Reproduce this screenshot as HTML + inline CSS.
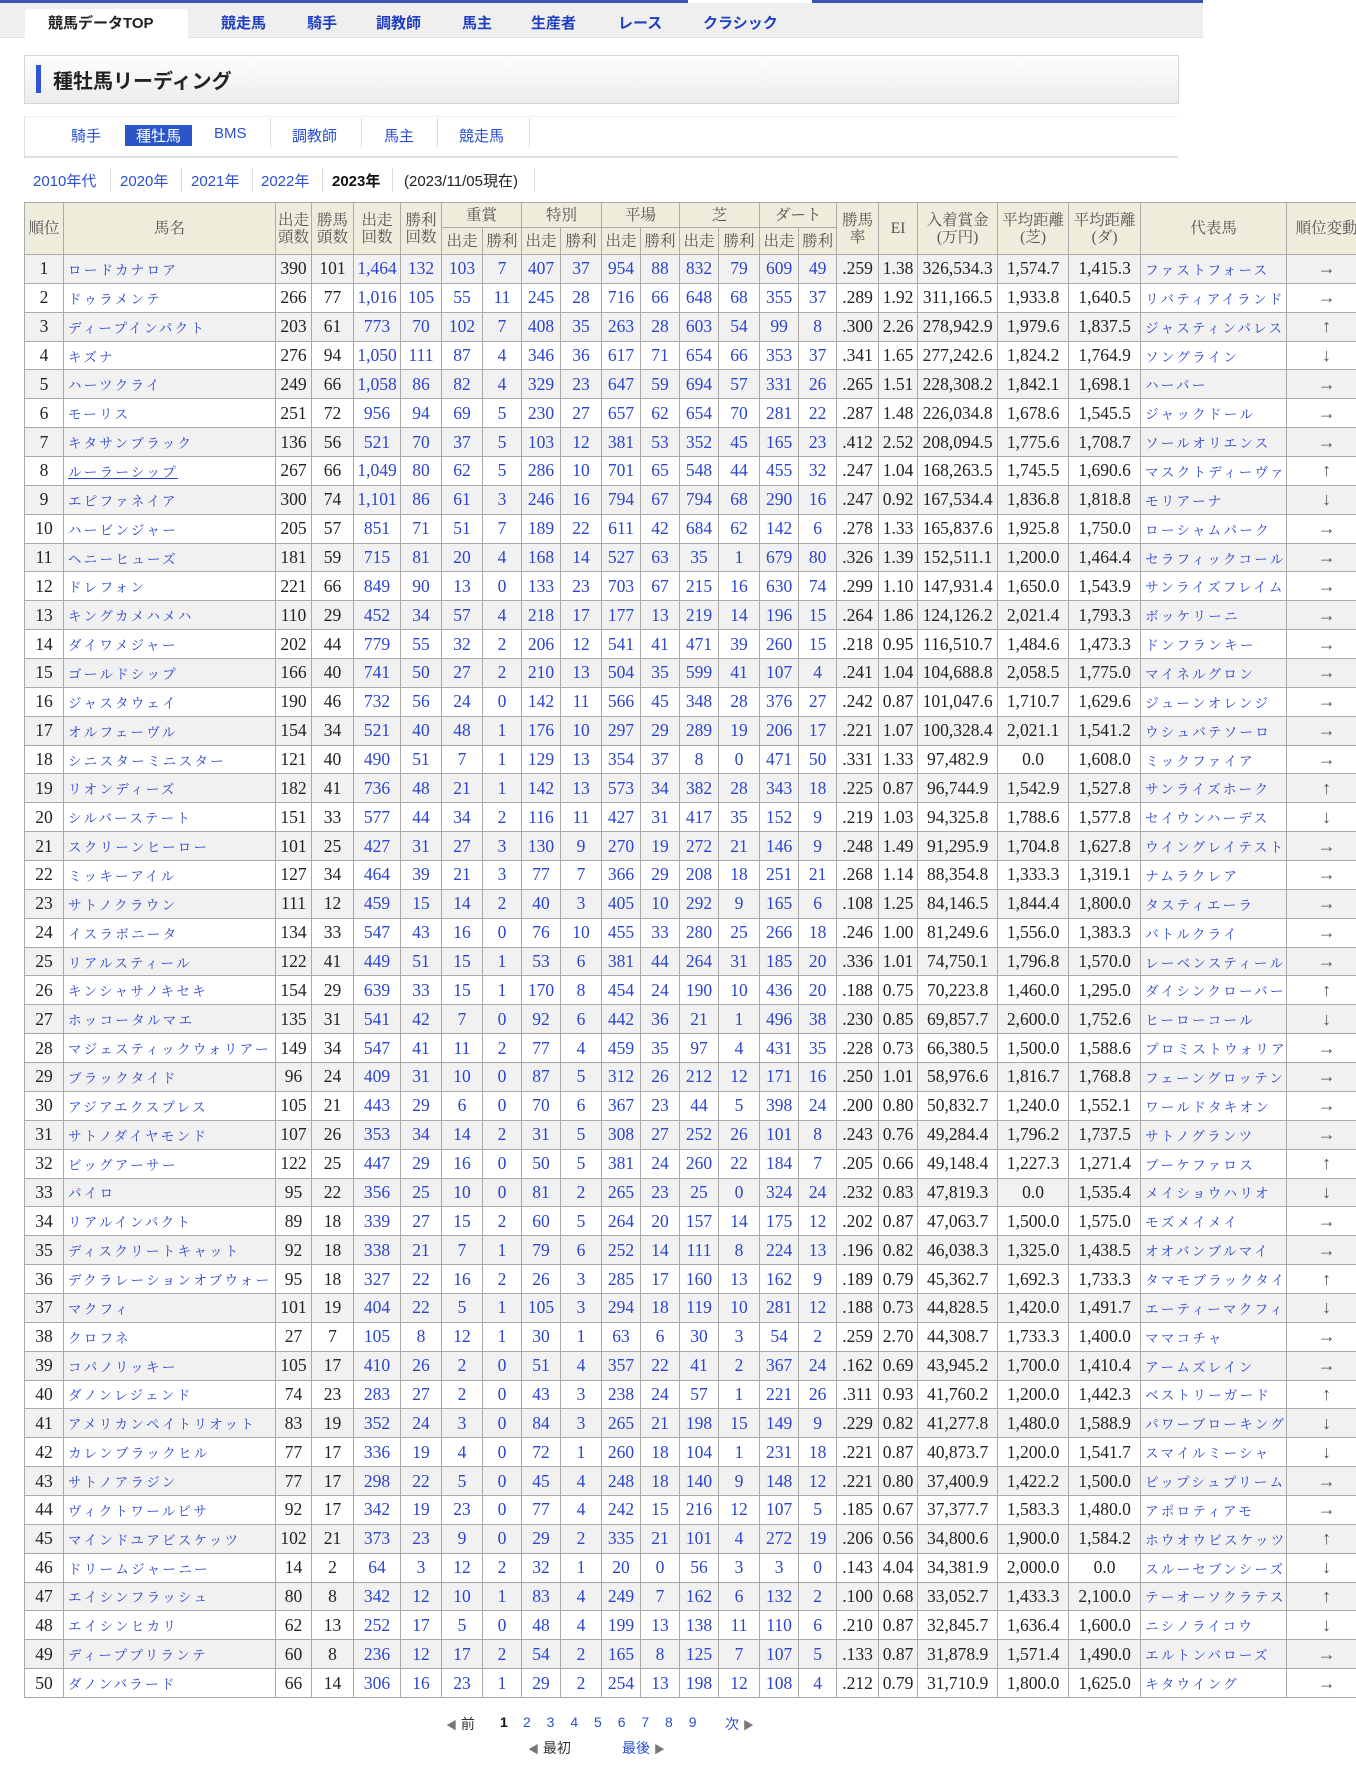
<!DOCTYPE html>
<html><head><meta charset="utf-8">
<style>
html,body{margin:0;padding:0;background:#fff;}
body{width:1356px;height:1778px;overflow:hidden;position:relative;font-family:"Liberation Sans","Noto Sans CJK JP",sans-serif;}
.topline{position:absolute;left:0;top:0;height:3px;background:#3a54b4;}
.nav{position:absolute;left:0;top:3px;width:1203px;height:34px;background:#efefef;border-bottom:1px solid #e2e2e2;}
.tab{position:absolute;left:25px;top:9px;width:163px;height:29px;background:#fff;border-radius:4px 4px 0 0;}
.nv{position:absolute;top:12px;font-size:15px;font-weight:bold;color:#1f3fc0;white-space:nowrap;}
.titlebox{position:absolute;left:24px;top:55px;width:1153px;height:47px;border:1px solid #d6d6d6;background:linear-gradient(#fefefe,#ececec);}
.titlebar{position:absolute;left:11px;top:9px;width:5px;height:28px;background:#2f55d4;}
.title{position:absolute;left:28px;top:9px;font-size:20px;font-weight:bold;color:#222;}
.subbox{position:absolute;left:24px;top:116px;width:1153px;height:39px;border:1px solid #e0e0e0;border-right:none;border-top:1px solid #f2f2f2;border-bottom:2px solid #e0e0e0;}
.sn{position:absolute;top:125px;font-size:15px;color:#2a4fd0;white-space:nowrap;}
.sel{position:absolute;left:125px;top:125px;width:67px;height:21px;background:#2a56c8;}
.sep{position:absolute;width:1px;background:#dcdcdc;}
.yr{position:absolute;top:170px;font-size:15px;color:#2a4fd0;white-space:nowrap;}
table{position:absolute;left:24px;top:202px;border-collapse:collapse;table-layout:fixed;width:1342px;font-family:"Liberation Serif","Noto Serif CJK SC",serif;}
th{background:#efecdc;border:1px solid #a9a9a9;color:#555;font-weight:normal;font-size:15.5px;line-height:17px;padding:0;text-align:center;}
td{border:1px solid #a9a9a9;padding:0;text-align:center;font-size:17.5px;color:#222;white-space:nowrap;overflow:hidden;}
thead tr.r1{height:25px}
thead tr.r2{height:27px}
tbody tr{height:28.86px}
tbody tr:nth-child(odd){background:#f1f1f1}
tbody td:nth-child(2),tbody td:nth-child(22){text-align:left;padding-left:4px;font-size:13.5px;letter-spacing:2.3px;color:#2a45cc;}
tbody td:nth-child(n+5):nth-child(-n+16){color:#2a45cc;}
tbody td:nth-child(23){color:#555;font-size:18px;}
.pg{position:absolute;font-size:14px;white-space:nowrap;color:#2a4fd0;}
.tri{color:#777;font-size:11px;}
</style></head><body>
<div class="topline" style="width:688px"></div>
<div class="topline" style="left:812px;width:391px"></div>
<div class="nav"></div>
<div class="tab"></div>
<div class="nv" style="left:48px;color:#222">競馬データTOP</div>
<div class="nv" style="left:221px">競走馬</div>
<div class="nv" style="left:307px">騎手</div>
<div class="nv" style="left:376px">調教師</div>
<div class="nv" style="left:462px">馬主</div>
<div class="nv" style="left:531px">生産者</div>
<div class="nv" style="left:618px">レース</div>
<div class="nv" style="left:703px">クラシック</div>

<div class="titlebox"><div class="titlebar"></div><div class="title">種牡馬リーディング</div></div>

<div class="subbox"></div>
<div class="sel"></div>
<div class="sn" style="left:71px">騎手</div>
<div class="sn" style="left:136px;color:#fff">種牡馬</div>
<div class="sn" style="left:214px">BMS</div>
<div class="sep" style="left:270px;top:118px;height:29px"></div>
<div class="sn" style="left:292px">調教師</div>
<div class="sep" style="left:361px;top:118px;height:29px"></div>
<div class="sn" style="left:384px">馬主</div>
<div class="sep" style="left:437px;top:118px;height:29px"></div>
<div class="sn" style="left:459px">競走馬</div>
<div class="sep" style="left:529px;top:118px;height:29px"></div>

<div class="yr" style="left:33px">2010年代</div>
<div class="sep" style="left:110px;top:168px;height:24px"></div>
<div class="yr" style="left:120px">2020年</div>
<div class="sep" style="left:181px;top:168px;height:24px"></div>
<div class="yr" style="left:191px">2021年</div>
<div class="sep" style="left:252px;top:168px;height:24px"></div>
<div class="yr" style="left:261px">2022年</div>
<div class="sep" style="left:322px;top:168px;height:24px"></div>
<div class="yr" style="left:332px;color:#111;font-weight:bold">2023年</div>
<div class="sep" style="left:392px;top:168px;height:24px"></div>
<div class="yr" style="left:404px;color:#222">(2023/11/05現在)</div>
<div class="sep" style="left:534px;top:168px;height:24px"></div>

<table>
<colgroup><col style="width:39px"><col style="width:212px"><col style="width:36px"><col style="width:42px"><col style="width:47px"><col style="width:41px"><col style="width:41px"><col style="width:39px"><col style="width:39px"><col style="width:41px"><col style="width:39px"><col style="width:39px"><col style="width:39px"><col style="width:41px"><col style="width:39px"><col style="width:38px"><col style="width:42px"><col style="width:39px"><col style="width:80px"><col style="width:71px"><col style="width:72px"><col style="width:146px"><col style="width:80px"></colgroup>
<thead>
<tr class="r1"><th rowspan="2">順位</th><th rowspan="2">馬名</th><th rowspan="2">出走<br>頭数</th><th rowspan="2">勝馬<br>頭数</th><th rowspan="2">出走<br>回数</th><th rowspan="2">勝利<br>回数</th><th colspan="2">重賞</th><th colspan="2">特別</th><th colspan="2">平場</th><th colspan="2">芝</th><th colspan="2">ダート</th><th rowspan="2">勝馬<br>率</th><th rowspan="2">EI</th><th rowspan="2">入着賞金<br>(万円)</th><th rowspan="2">平均距離<br>(芝)</th><th rowspan="2">平均距離<br>(ダ)</th><th rowspan="2">代表馬</th><th rowspan="2">順位変動</th></tr>
<tr class="r2"><th>出走</th><th>勝利</th><th>出走</th><th>勝利</th><th>出走</th><th>勝利</th><th>出走</th><th>勝利</th><th>出走</th><th>勝利</th></tr>
</thead>
<tbody>
<tr><td>1</td><td>ロードカナロア</td><td>390</td><td>101</td><td>1,464</td><td>132</td><td>103</td><td>7</td><td>407</td><td>37</td><td>954</td><td>88</td><td>832</td><td>79</td><td>609</td><td>49</td><td>.259</td><td>1.38</td><td>326,534.3</td><td>1,574.7</td><td>1,415.3</td><td>ファストフォース</td><td>→</td></tr>
<tr><td>2</td><td>ドゥラメンテ</td><td>266</td><td>77</td><td>1,016</td><td>105</td><td>55</td><td>11</td><td>245</td><td>28</td><td>716</td><td>66</td><td>648</td><td>68</td><td>355</td><td>37</td><td>.289</td><td>1.92</td><td>311,166.5</td><td>1,933.8</td><td>1,640.5</td><td>リバティアイランド</td><td>→</td></tr>
<tr><td>3</td><td>ディープインパクト</td><td>203</td><td>61</td><td>773</td><td>70</td><td>102</td><td>7</td><td>408</td><td>35</td><td>263</td><td>28</td><td>603</td><td>54</td><td>99</td><td>8</td><td>.300</td><td>2.26</td><td>278,942.9</td><td>1,979.6</td><td>1,837.5</td><td>ジャスティンパレス</td><td>↑</td></tr>
<tr><td>4</td><td>キズナ</td><td>276</td><td>94</td><td>1,050</td><td>111</td><td>87</td><td>4</td><td>346</td><td>36</td><td>617</td><td>71</td><td>654</td><td>66</td><td>353</td><td>37</td><td>.341</td><td>1.65</td><td>277,242.6</td><td>1,824.2</td><td>1,764.9</td><td>ソングライン</td><td>↓</td></tr>
<tr><td>5</td><td>ハーツクライ</td><td>249</td><td>66</td><td>1,058</td><td>86</td><td>82</td><td>4</td><td>329</td><td>23</td><td>647</td><td>59</td><td>694</td><td>57</td><td>331</td><td>26</td><td>.265</td><td>1.51</td><td>228,308.2</td><td>1,842.1</td><td>1,698.1</td><td>ハーパー</td><td>→</td></tr>
<tr><td>6</td><td>モーリス</td><td>251</td><td>72</td><td>956</td><td>94</td><td>69</td><td>5</td><td>230</td><td>27</td><td>657</td><td>62</td><td>654</td><td>70</td><td>281</td><td>22</td><td>.287</td><td>1.48</td><td>226,034.8</td><td>1,678.6</td><td>1,545.5</td><td>ジャックドール</td><td>→</td></tr>
<tr><td>7</td><td>キタサンブラック</td><td>136</td><td>56</td><td>521</td><td>70</td><td>37</td><td>5</td><td>103</td><td>12</td><td>381</td><td>53</td><td>352</td><td>45</td><td>165</td><td>23</td><td>.412</td><td>2.52</td><td>208,094.5</td><td>1,775.6</td><td>1,708.7</td><td>ソールオリエンス</td><td>→</td></tr>
<tr><td>8</td><td><u>ルーラーシップ</u></td><td>267</td><td>66</td><td>1,049</td><td>80</td><td>62</td><td>5</td><td>286</td><td>10</td><td>701</td><td>65</td><td>548</td><td>44</td><td>455</td><td>32</td><td>.247</td><td>1.04</td><td>168,263.5</td><td>1,745.5</td><td>1,690.6</td><td>マスクトディーヴァ</td><td>↑</td></tr>
<tr><td>9</td><td>エピファネイア</td><td>300</td><td>74</td><td>1,101</td><td>86</td><td>61</td><td>3</td><td>246</td><td>16</td><td>794</td><td>67</td><td>794</td><td>68</td><td>290</td><td>16</td><td>.247</td><td>0.92</td><td>167,534.4</td><td>1,836.8</td><td>1,818.8</td><td>モリアーナ</td><td>↓</td></tr>
<tr><td>10</td><td>ハービンジャー</td><td>205</td><td>57</td><td>851</td><td>71</td><td>51</td><td>7</td><td>189</td><td>22</td><td>611</td><td>42</td><td>684</td><td>62</td><td>142</td><td>6</td><td>.278</td><td>1.33</td><td>165,837.6</td><td>1,925.8</td><td>1,750.0</td><td>ローシャムパーク</td><td>→</td></tr>
<tr><td>11</td><td>ヘニーヒューズ</td><td>181</td><td>59</td><td>715</td><td>81</td><td>20</td><td>4</td><td>168</td><td>14</td><td>527</td><td>63</td><td>35</td><td>1</td><td>679</td><td>80</td><td>.326</td><td>1.39</td><td>152,511.1</td><td>1,200.0</td><td>1,464.4</td><td>セラフィックコール</td><td>→</td></tr>
<tr><td>12</td><td>ドレフォン</td><td>221</td><td>66</td><td>849</td><td>90</td><td>13</td><td>0</td><td>133</td><td>23</td><td>703</td><td>67</td><td>215</td><td>16</td><td>630</td><td>74</td><td>.299</td><td>1.10</td><td>147,931.4</td><td>1,650.0</td><td>1,543.9</td><td>サンライズフレイム</td><td>→</td></tr>
<tr><td>13</td><td>キングカメハメハ</td><td>110</td><td>29</td><td>452</td><td>34</td><td>57</td><td>4</td><td>218</td><td>17</td><td>177</td><td>13</td><td>219</td><td>14</td><td>196</td><td>15</td><td>.264</td><td>1.86</td><td>124,126.2</td><td>2,021.4</td><td>1,793.3</td><td>ボッケリーニ</td><td>→</td></tr>
<tr><td>14</td><td>ダイワメジャー</td><td>202</td><td>44</td><td>779</td><td>55</td><td>32</td><td>2</td><td>206</td><td>12</td><td>541</td><td>41</td><td>471</td><td>39</td><td>260</td><td>15</td><td>.218</td><td>0.95</td><td>116,510.7</td><td>1,484.6</td><td>1,473.3</td><td>ドンフランキー</td><td>→</td></tr>
<tr><td>15</td><td>ゴールドシップ</td><td>166</td><td>40</td><td>741</td><td>50</td><td>27</td><td>2</td><td>210</td><td>13</td><td>504</td><td>35</td><td>599</td><td>41</td><td>107</td><td>4</td><td>.241</td><td>1.04</td><td>104,688.8</td><td>2,058.5</td><td>1,775.0</td><td>マイネルグロン</td><td>→</td></tr>
<tr><td>16</td><td>ジャスタウェイ</td><td>190</td><td>46</td><td>732</td><td>56</td><td>24</td><td>0</td><td>142</td><td>11</td><td>566</td><td>45</td><td>348</td><td>28</td><td>376</td><td>27</td><td>.242</td><td>0.87</td><td>101,047.6</td><td>1,710.7</td><td>1,629.6</td><td>ジューンオレンジ</td><td>→</td></tr>
<tr><td>17</td><td>オルフェーヴル</td><td>154</td><td>34</td><td>521</td><td>40</td><td>48</td><td>1</td><td>176</td><td>10</td><td>297</td><td>29</td><td>289</td><td>19</td><td>206</td><td>17</td><td>.221</td><td>1.07</td><td>100,328.4</td><td>2,021.1</td><td>1,541.2</td><td>ウシュバテソーロ</td><td>→</td></tr>
<tr><td>18</td><td>シニスターミニスター</td><td>121</td><td>40</td><td>490</td><td>51</td><td>7</td><td>1</td><td>129</td><td>13</td><td>354</td><td>37</td><td>8</td><td>0</td><td>471</td><td>50</td><td>.331</td><td>1.33</td><td>97,482.9</td><td>0.0</td><td>1,608.0</td><td>ミックファイア</td><td>→</td></tr>
<tr><td>19</td><td>リオンディーズ</td><td>182</td><td>41</td><td>736</td><td>48</td><td>21</td><td>1</td><td>142</td><td>13</td><td>573</td><td>34</td><td>382</td><td>28</td><td>343</td><td>18</td><td>.225</td><td>0.87</td><td>96,744.9</td><td>1,542.9</td><td>1,527.8</td><td>サンライズホーク</td><td>↑</td></tr>
<tr><td>20</td><td>シルバーステート</td><td>151</td><td>33</td><td>577</td><td>44</td><td>34</td><td>2</td><td>116</td><td>11</td><td>427</td><td>31</td><td>417</td><td>35</td><td>152</td><td>9</td><td>.219</td><td>1.03</td><td>94,325.8</td><td>1,788.6</td><td>1,577.8</td><td>セイウンハーデス</td><td>↓</td></tr>
<tr><td>21</td><td>スクリーンヒーロー</td><td>101</td><td>25</td><td>427</td><td>31</td><td>27</td><td>3</td><td>130</td><td>9</td><td>270</td><td>19</td><td>272</td><td>21</td><td>146</td><td>9</td><td>.248</td><td>1.49</td><td>91,295.9</td><td>1,704.8</td><td>1,627.8</td><td>ウイングレイテスト</td><td>→</td></tr>
<tr><td>22</td><td>ミッキーアイル</td><td>127</td><td>34</td><td>464</td><td>39</td><td>21</td><td>3</td><td>77</td><td>7</td><td>366</td><td>29</td><td>208</td><td>18</td><td>251</td><td>21</td><td>.268</td><td>1.14</td><td>88,354.8</td><td>1,333.3</td><td>1,319.1</td><td>ナムラクレア</td><td>→</td></tr>
<tr><td>23</td><td>サトノクラウン</td><td>111</td><td>12</td><td>459</td><td>15</td><td>14</td><td>2</td><td>40</td><td>3</td><td>405</td><td>10</td><td>292</td><td>9</td><td>165</td><td>6</td><td>.108</td><td>1.25</td><td>84,146.5</td><td>1,844.4</td><td>1,800.0</td><td>タスティエーラ</td><td>→</td></tr>
<tr><td>24</td><td>イスラボニータ</td><td>134</td><td>33</td><td>547</td><td>43</td><td>16</td><td>0</td><td>76</td><td>10</td><td>455</td><td>33</td><td>280</td><td>25</td><td>266</td><td>18</td><td>.246</td><td>1.00</td><td>81,249.6</td><td>1,556.0</td><td>1,383.3</td><td>バトルクライ</td><td>→</td></tr>
<tr><td>25</td><td>リアルスティール</td><td>122</td><td>41</td><td>449</td><td>51</td><td>15</td><td>1</td><td>53</td><td>6</td><td>381</td><td>44</td><td>264</td><td>31</td><td>185</td><td>20</td><td>.336</td><td>1.01</td><td>74,750.1</td><td>1,796.8</td><td>1,570.0</td><td>レーベンスティール</td><td>→</td></tr>
<tr><td>26</td><td>キンシャサノキセキ</td><td>154</td><td>29</td><td>639</td><td>33</td><td>15</td><td>1</td><td>170</td><td>8</td><td>454</td><td>24</td><td>190</td><td>10</td><td>436</td><td>20</td><td>.188</td><td>0.75</td><td>70,223.8</td><td>1,460.0</td><td>1,295.0</td><td>ダイシンクローバー</td><td>↑</td></tr>
<tr><td>27</td><td>ホッコータルマエ</td><td>135</td><td>31</td><td>541</td><td>42</td><td>7</td><td>0</td><td>92</td><td>6</td><td>442</td><td>36</td><td>21</td><td>1</td><td>496</td><td>38</td><td>.230</td><td>0.85</td><td>69,857.7</td><td>2,600.0</td><td>1,752.6</td><td>ヒーローコール</td><td>↓</td></tr>
<tr><td>28</td><td>マジェスティックウォリアー</td><td>149</td><td>34</td><td>547</td><td>41</td><td>11</td><td>2</td><td>77</td><td>4</td><td>459</td><td>35</td><td>97</td><td>4</td><td>431</td><td>35</td><td>.228</td><td>0.73</td><td>66,380.5</td><td>1,500.0</td><td>1,588.6</td><td>プロミストウォリア</td><td>→</td></tr>
<tr><td>29</td><td>ブラックタイド</td><td>96</td><td>24</td><td>409</td><td>31</td><td>10</td><td>0</td><td>87</td><td>5</td><td>312</td><td>26</td><td>212</td><td>12</td><td>171</td><td>16</td><td>.250</td><td>1.01</td><td>58,976.6</td><td>1,816.7</td><td>1,768.8</td><td>フェーングロッテン</td><td>→</td></tr>
<tr><td>30</td><td>アジアエクスプレス</td><td>105</td><td>21</td><td>443</td><td>29</td><td>6</td><td>0</td><td>70</td><td>6</td><td>367</td><td>23</td><td>44</td><td>5</td><td>398</td><td>24</td><td>.200</td><td>0.80</td><td>50,832.7</td><td>1,240.0</td><td>1,552.1</td><td>ワールドタキオン</td><td>→</td></tr>
<tr><td>31</td><td>サトノダイヤモンド</td><td>107</td><td>26</td><td>353</td><td>34</td><td>14</td><td>2</td><td>31</td><td>5</td><td>308</td><td>27</td><td>252</td><td>26</td><td>101</td><td>8</td><td>.243</td><td>0.76</td><td>49,284.4</td><td>1,796.2</td><td>1,737.5</td><td>サトノグランツ</td><td>→</td></tr>
<tr><td>32</td><td>ビッグアーサー</td><td>122</td><td>25</td><td>447</td><td>29</td><td>16</td><td>0</td><td>50</td><td>5</td><td>381</td><td>24</td><td>260</td><td>22</td><td>184</td><td>7</td><td>.205</td><td>0.66</td><td>49,148.4</td><td>1,227.3</td><td>1,271.4</td><td>ブーケファロス</td><td>↑</td></tr>
<tr><td>33</td><td>パイロ</td><td>95</td><td>22</td><td>356</td><td>25</td><td>10</td><td>0</td><td>81</td><td>2</td><td>265</td><td>23</td><td>25</td><td>0</td><td>324</td><td>24</td><td>.232</td><td>0.83</td><td>47,819.3</td><td>0.0</td><td>1,535.4</td><td>メイショウハリオ</td><td>↓</td></tr>
<tr><td>34</td><td>リアルインパクト</td><td>89</td><td>18</td><td>339</td><td>27</td><td>15</td><td>2</td><td>60</td><td>5</td><td>264</td><td>20</td><td>157</td><td>14</td><td>175</td><td>12</td><td>.202</td><td>0.87</td><td>47,063.7</td><td>1,500.0</td><td>1,575.0</td><td>モズメイメイ</td><td>→</td></tr>
<tr><td>35</td><td>ディスクリートキャット</td><td>92</td><td>18</td><td>338</td><td>21</td><td>7</td><td>1</td><td>79</td><td>6</td><td>252</td><td>14</td><td>111</td><td>8</td><td>224</td><td>13</td><td>.196</td><td>0.82</td><td>46,038.3</td><td>1,325.0</td><td>1,438.5</td><td>オオバンブルマイ</td><td>→</td></tr>
<tr><td>36</td><td>デクラレーションオブウォー</td><td>95</td><td>18</td><td>327</td><td>22</td><td>16</td><td>2</td><td>26</td><td>3</td><td>285</td><td>17</td><td>160</td><td>13</td><td>162</td><td>9</td><td>.189</td><td>0.79</td><td>45,362.7</td><td>1,692.3</td><td>1,733.3</td><td>タマモブラックタイ</td><td>↑</td></tr>
<tr><td>37</td><td>マクフィ</td><td>101</td><td>19</td><td>404</td><td>22</td><td>5</td><td>1</td><td>105</td><td>3</td><td>294</td><td>18</td><td>119</td><td>10</td><td>281</td><td>12</td><td>.188</td><td>0.73</td><td>44,828.5</td><td>1,420.0</td><td>1,491.7</td><td>エーティーマクフィ</td><td>↓</td></tr>
<tr><td>38</td><td>クロフネ</td><td>27</td><td>7</td><td>105</td><td>8</td><td>12</td><td>1</td><td>30</td><td>1</td><td>63</td><td>6</td><td>30</td><td>3</td><td>54</td><td>2</td><td>.259</td><td>2.70</td><td>44,308.7</td><td>1,733.3</td><td>1,400.0</td><td>ママコチャ</td><td>→</td></tr>
<tr><td>39</td><td>コパノリッキー</td><td>105</td><td>17</td><td>410</td><td>26</td><td>2</td><td>0</td><td>51</td><td>4</td><td>357</td><td>22</td><td>41</td><td>2</td><td>367</td><td>24</td><td>.162</td><td>0.69</td><td>43,945.2</td><td>1,700.0</td><td>1,410.4</td><td>アームズレイン</td><td>→</td></tr>
<tr><td>40</td><td>ダノンレジェンド</td><td>74</td><td>23</td><td>283</td><td>27</td><td>2</td><td>0</td><td>43</td><td>3</td><td>238</td><td>24</td><td>57</td><td>1</td><td>221</td><td>26</td><td>.311</td><td>0.93</td><td>41,760.2</td><td>1,200.0</td><td>1,442.3</td><td>ベストリーガード</td><td>↑</td></tr>
<tr><td>41</td><td>アメリカンペイトリオット</td><td>83</td><td>19</td><td>352</td><td>24</td><td>3</td><td>0</td><td>84</td><td>3</td><td>265</td><td>21</td><td>198</td><td>15</td><td>149</td><td>9</td><td>.229</td><td>0.82</td><td>41,277.8</td><td>1,480.0</td><td>1,588.9</td><td>パワーブローキング</td><td>↓</td></tr>
<tr><td>42</td><td>カレンブラックヒル</td><td>77</td><td>17</td><td>336</td><td>19</td><td>4</td><td>0</td><td>72</td><td>1</td><td>260</td><td>18</td><td>104</td><td>1</td><td>231</td><td>18</td><td>.221</td><td>0.87</td><td>40,873.7</td><td>1,200.0</td><td>1,541.7</td><td>スマイルミーシャ</td><td>↓</td></tr>
<tr><td>43</td><td>サトノアラジン</td><td>77</td><td>17</td><td>298</td><td>22</td><td>5</td><td>0</td><td>45</td><td>4</td><td>248</td><td>18</td><td>140</td><td>9</td><td>148</td><td>12</td><td>.221</td><td>0.80</td><td>37,400.9</td><td>1,422.2</td><td>1,500.0</td><td>ビップシュプリーム</td><td>→</td></tr>
<tr><td>44</td><td>ヴィクトワールピサ</td><td>92</td><td>17</td><td>342</td><td>19</td><td>23</td><td>0</td><td>77</td><td>4</td><td>242</td><td>15</td><td>216</td><td>12</td><td>107</td><td>5</td><td>.185</td><td>0.67</td><td>37,377.7</td><td>1,583.3</td><td>1,480.0</td><td>アポロティアモ</td><td>→</td></tr>
<tr><td>45</td><td>マインドユアビスケッツ</td><td>102</td><td>21</td><td>373</td><td>23</td><td>9</td><td>0</td><td>29</td><td>2</td><td>335</td><td>21</td><td>101</td><td>4</td><td>272</td><td>19</td><td>.206</td><td>0.56</td><td>34,800.6</td><td>1,900.0</td><td>1,584.2</td><td>ホウオウビスケッツ</td><td>↑</td></tr>
<tr><td>46</td><td>ドリームジャーニー</td><td>14</td><td>2</td><td>64</td><td>3</td><td>12</td><td>2</td><td>32</td><td>1</td><td>20</td><td>0</td><td>56</td><td>3</td><td>3</td><td>0</td><td>.143</td><td>4.04</td><td>34,381.9</td><td>2,000.0</td><td>0.0</td><td>スルーセブンシーズ</td><td>↓</td></tr>
<tr><td>47</td><td>エイシンフラッシュ</td><td>80</td><td>8</td><td>342</td><td>12</td><td>10</td><td>1</td><td>83</td><td>4</td><td>249</td><td>7</td><td>162</td><td>6</td><td>132</td><td>2</td><td>.100</td><td>0.68</td><td>33,052.7</td><td>1,433.3</td><td>2,100.0</td><td>テーオーソクラテス</td><td>↑</td></tr>
<tr><td>48</td><td>エイシンヒカリ</td><td>62</td><td>13</td><td>252</td><td>17</td><td>5</td><td>0</td><td>48</td><td>4</td><td>199</td><td>13</td><td>138</td><td>11</td><td>110</td><td>6</td><td>.210</td><td>0.87</td><td>32,845.7</td><td>1,636.4</td><td>1,600.0</td><td>ニシノライコウ</td><td>↓</td></tr>
<tr><td>49</td><td>ディープブリランテ</td><td>60</td><td>8</td><td>236</td><td>12</td><td>17</td><td>2</td><td>54</td><td>2</td><td>165</td><td>8</td><td>125</td><td>7</td><td>107</td><td>5</td><td>.133</td><td>0.87</td><td>31,878.9</td><td>1,571.4</td><td>1,490.0</td><td>エルトンバローズ</td><td>→</td></tr>
<tr><td>50</td><td>ダノンバラード</td><td>66</td><td>14</td><td>306</td><td>16</td><td>23</td><td>1</td><td>29</td><td>2</td><td>254</td><td>13</td><td>198</td><td>12</td><td>108</td><td>4</td><td>.212</td><td>0.79</td><td>31,710.9</td><td>1,800.0</td><td>1,625.0</td><td>キタウイング</td><td>→</td></tr>
</tbody>
</table>

<div class="pg" style="left:446px;top:1714px;color:#333"><span class="tri">◀</span> 前</div>
<div class="pg" style="left:500px;top:1714px;color:#111;font-weight:bold">1</div>
<div class="pg" style="left:523px;top:1714px;word-spacing:12px">2 3 4 5 6 7 8 9</div>
<div class="pg" style="left:725px;top:1714px">次 <span class="tri">▶</span></div>
<div class="pg" style="left:528px;top:1738px;color:#333"><span class="tri">◀</span> 最初</div>
<div class="pg" style="left:622px;top:1738px">最後 <span class="tri">▶</span></div>
</body></html>
